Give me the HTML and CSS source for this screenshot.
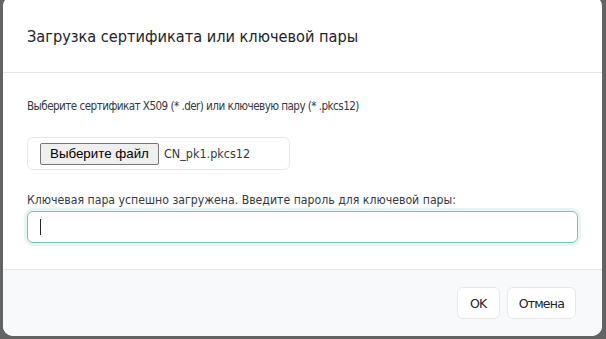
FILE: index.html
```html
<!DOCTYPE html>
<html lang="ru">
<head>
    <meta charset="UTF-8">
    <meta name="viewport" content="width=device-width, initial-scale=1.0">
    <title>Загрузка сертификата</title>
    <link rel="stylesheet" href="styles.css">
</head>
<body>
    <div class="modal">
        <div class="modal-header">
            <h5 class="modal-title">Загрузка сертификата или ключевой пары</h5>
        </div>

        <div class="modal-body">
            <p class="hint">Выберите сертификат X509 (* .der) или ключевую пару (* .pkcs12)</p>

            <div class="file-box">
                <button class="file-button" type="button">Выберите файл</button>
                <span class="file-name">CN_pk1.pkcs12</span>
            </div>

            <label class="field-label">Ключевая пара успешно загружена. Введите пароль для ключевой пары:</label>
            <div class="password-input">
                <span class="caret"></span>
            </div>
        </div>

        <div class="modal-footer">
            <button class="btn" type="button">OK</button>
            <button class="btn" type="button">Отмена</button>
        </div>
    </div>
</body>
</html>
```

FILE: styles.css
```css
body {
    background-color: #636363;
    margin: 0;
    height: 339px;
    overflow: hidden;
    font-family: "DejaVu Sans", sans-serif;
    font-stretch: condensed;
    color: #212529;
}

.modal {
    margin: -4px 0 0 3px;
    width: 599px;
    background-color: #fff;
    border-radius: 10px;
    overflow: hidden;
}

/* -- Header -- */

.modal-header {
    padding: 29px 24px 23px;
    border-bottom: 1px solid #e3e5e8;
}

.modal-title {
    margin: 0;
    font-size: 16.2px;
    font-weight: 400;
    line-height: 24px;
}

/* -- Body -- */

.modal-body {
    padding: 23px 24px 26px;
    display: flex;
    flex-direction: column;
    align-items: flex-start;
}

.hint {
    margin: 0 0 21px;
    font-size: 11.6px;
    letter-spacing: -0.55px;
    line-height: 20px;
    color: #343a40;
}

.file-box {
    box-sizing: border-box;
    width: 263px;
    height: 33px;
    padding: 0 12px;
    border: 1px solid #e6e8ea;
    border-radius: 6px;
    display: flex;
    align-items: center;
    gap: 5px;
}

.file-button {
    height: 22px;
    padding: 0 9px;
    font-family: "Liberation Sans", Arial, sans-serif;
    font-stretch: normal;
    font-size: 13.33px;
    color: #000;
    background-color: #efefef;
    border: 1px solid #767676;
    border-radius: 2px;
}

.file-name {
    font-size: 12.5px;
    color: #343a40;
}

.field-label {
    margin: 21px 0 2px;
    font-size: 12.2px;
    line-height: 18px;
    color: #343a40;
}

.password-input {
    box-sizing: border-box;
    width: 100%;
    height: 32px;
    padding: 0 12px;
    border: 1px solid #73c2b6;
    border-radius: 6px;
    box-shadow: 0 0 0 3px #e8f5f2;
    display: flex;
    align-items: center;
}

.caret {
    width: 1px;
    height: 16px;
    background-color: #222;
}

/* -- Footer -- */

.modal-footer {
    height: 66px;
    padding: 0 26px 0 24px;
    background-color: #f8f9fa;
    border-top: 1px solid #e3e5e8;
    display: flex;
    align-items: center;
    justify-content: flex-end;
    gap: 7px;
}

.btn {
    min-width: 43px;
    height: 32px;
    padding: 0 11px;
    font-family: inherit;
    font-size: 12.5px;
    letter-spacing: -0.8px;
    color: #212529;
    background-color: #fff;
    border: 1px solid #e6e8ea;
    border-radius: 6px;
}
```
